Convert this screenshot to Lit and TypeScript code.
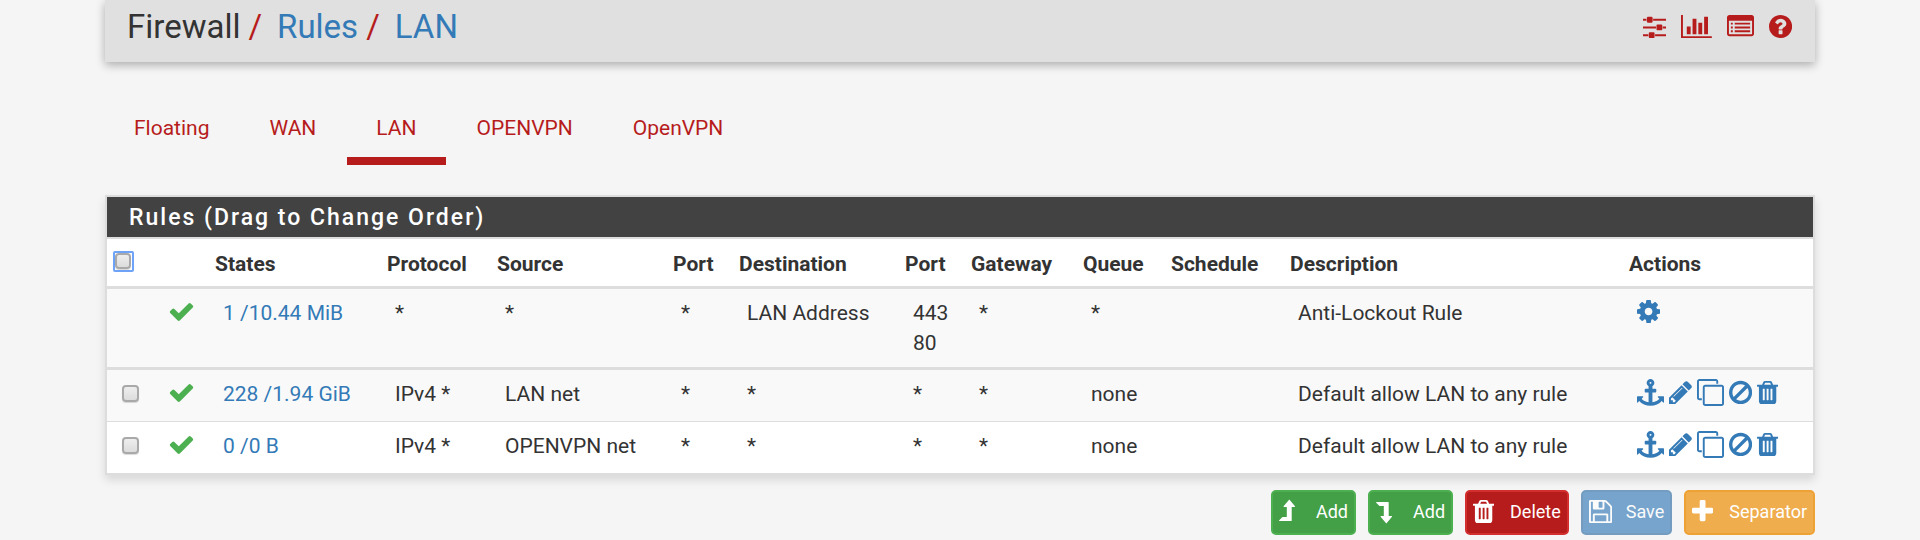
import { LitElement, html, css, svg, nothing } from "lit";
import { customElement, property } from "lit/decorators.js";

const bar = (x: number, y: number, w: number, h: number) => `M${x} ${y}h${w}v${h}h${-w}z`;

const icons: Record<string, { box: [number, number, number, number]; path: string }> = {
  sliders: {
    box: [128, 0, 1536, 1792],
    path: "M480 1408v128h-352v-128h352zm352-128q26 0 45 19t19 45v256q0 26-19 45t-45 19h-256q-26 0-45-19t-19-45v-256q0-26 19-45t45-19h256zm160-384v128h-864v-128h864zm-640-512v128h-224v-128h224zm1312 1024v128h-736v-128h736zm-960-1152q26 0 45 19t19 45v256q0 26-19 45t-45 19h-256q-26 0-45-19t-19-45v-256q0-26 19-45t45-19h256zm640 512q26 0 45 19t19 45v256q0 26-19 45t-45 19h-256q-26 0-45-19t-19-45v-256q0-26 19-45t45-19h256zm320 128v128h-224v-128h224zm0-512v128h-864v-128h864z",
  },
  chart: {
    box: [0, 0, 2048, 1792],
    path: "M640 896v512h-256v-512h256zm384-512v1024h-256v-1024h256zm1024 1152v128h-2048v-1536h128v1408h1920zm-640-896v768h-256v-768h256zm384-384v1152h-256v-1152h256z",
  },
  list: {
    box: [0, 0, 1792, 1792],
    path:
      "M1664 1376v-832q0-13-9.5-22.5t-22.5-9.5h-1472q-13 0-22.5 9.5t-9.5 22.5v832q0 13 9.5 22.5t22.5 9.5h1472q13 0 22.5-9.5t9.5-22.5zm128-1088v1088q0 66-47 113t-113 47h-1472q-66 0-113-47t-47-113v-1088q0-66 47-113t113-47h1472q66 0 113 47t47 113z" +
      [640, 896, 1152].map((y) => bar(256, y, 128, 128) + bar(512, y, 1024, 128)).join(""),
  },
  help: {
    box: [128, 0, 1536, 1792],
    path: "M1024 1376v-192q0-14-9-23t-23-9h-192q-14 0-23 9t-9 23v192q0 14 9 23t23 9h192q14 0 23-9t9-23zm256-672q0-88-55.5-163t-138.5-116-170-41q-243 0-371 213-15 24 8 42l132 100q7 6 19 6 16 0 25-12 53-68 86-92 34-24 86-24 48 0 85.5 26t37.5 59q0 38-20 61t-68 45q-63 28-115.5 86.5t-52.5 125.5v36q0 14 9 23t23 9h192q14 0 23-9t9-23q0-19 21.5-49.5t54.5-49.5q32-18 49-28.5t46-35 44.5-48 28-60.5 12.5-81zm384 192q0 209-103 385.5t-279.5 279.5-385.5 103-385.5-103-279.5-279.5-103-385.5 103-385.5 279.5-279.5 385.5-103 385.5 103 279.5 279.5 103 385.5z",
  },
  check: {
    box: [0, 0, 1792, 1792],
    path: "M1671 566q0 40-28 68l-724 724-136 136q-28 28-68 28t-68-28l-136-136-362-362q-28-28-28-68t28-68l136-136q28-28 68-28t68 28l294 295 656-657q28-28 68-28t68 28l136 136q28 28 28 68z",
  },
  cog: {
    box: [128, 0, 1536, 1792],
    path: "M1152 896q0-106-75-181t-181-75-181 75-75 181 75 181 181 75 181-75 75-181zm512-109v222q0 12-8 23t-20 13l-185 28q-19 54-39 91 35 50 107 138 10 12 10 25t-9 23q-27 37-99 108t-94 71q-12 0-26-9l-138-108q-44 23-91 38-16 136-29 186-7 28-36 28h-222q-14 0-24.5-8.5t-11.5-21.5l-28-184q-49-16-90-37l-141 107q-10 9-25 9-14 0-25-11-126-114-165-168-7-10-7-23 0-12 8-23 15-21 51-66.5t54-70.5q-27-50-41-99l-183-27q-13-2-21-12.5t-8-23.5v-222q0-12 8-23t19-13l186-28q14-46 39-92-40-57-107-138-10-12-10-24 0-10 9-23 26-36 98.5-107.5t94.5-71.5q13 0 26 10l138 107q44-23 91-38 16-136 29-186 7-28 36-28h222q14 0 24.5 8.5t11.5 21.5l28 184q49 16 90 37l142-107q9-9 24-9 13 0 25 10 129 119 165 170 7 8 7 22 0 12-8 23-15 21-51 66.5t-54 70.5q26 50 41 98l183 28q13 2 21 12.5t8 23.5z",
  },
  anchor: {
    box: [0, 0, 1792, 1792],
    path: "M960 256q0-26-19-45t-45-19-45 19-19 45 19 45 45 19 45-19 19-45zm832 928v352q0 22-20 30-8 2-12 2-12 0-23-9l-93-93q-119 143-318.5 226.5t-429.5 83.5-429.5-83.5-318.5-226.5l-93 93q-9 9-23 9-4 0-12-2-20-8-20-30v-352q0-14 9-23t23-9h352q22 0 30 20 8 19-7 35l-100 100q67 91 189.5 153.5t271.5 82.5v-647h-192q-26 0-45-19t-19-45v-128q0-26 19-45t45-19h192v-163q-58-34-93-92.5t-35-128.5q0-106 75-181t181-75 181 75 75 181q0 70-35 128.5t-93 92.5v163h192q26 0 45 19t19 45v128q0 26-19 45t-45 19h-192v647q149-20 271.5-82.5t189.5-153.5l-100-100q-15-16-7-35 8-20 30-20h352q14 0 23 9t9 23z",
  },
  pencil: {
    box: [128, 0, 1536, 1792],
    path: "M491 1536l91-91-235-235-91 91v107h128v128h107zm523-928q0-22-22-22-10 0-17 7l-542 542q-7 7-7 17 0 22 22 22 10 0 17-7l542-542q7-7 7-17zm-54-192l416 416-832 832h-416v-416zm683 96q0 53-37 90l-166 166-416-416 166-165q36-38 90-38 53 0 91 38l235 234q37 39 37 91z",
  },
  clone: {
    box: [0, 0, 1792, 1792],
    path: "M1664 1632v-1088q0-13-9.5-22.5t-22.5-9.5h-1088q-13 0-22.5 9.5t-9.5 22.5v1088q0 13 9.5 22.5t22.5 9.5h1088q13 0 22.5-9.5t9.5-22.5zm128-1088v1088q0 66-47 113t-113 47h-1088q-66 0-113-47t-47-113v-1088q0-66 47-113t113-47h1088q66 0 113 47t47 113zm-384-384v160h-128v-160q0-13-9.5-22.5t-22.5-9.5h-1088q-13 0-22.5 9.5t-9.5 22.5v1088q0 13 9.5 22.5t22.5 9.5h160v128h-160q-66 0-113-47t-47-113v-1088q0-66 47-113t113-47h1088q66 0 113 47t47 113z",
  },
  ban: {
    box: [128, 0, 1536, 1792],
    path: "M1440 893q0-161-87-295l-754 753q137 89 297 89 111 0 211.5-43.5t173.5-116.5 116-174.5 43-212.5zm-999 299l755-754q-135-91-300-91-148 0-273 73t-198 199-73 274q0 162 89 299zm1223-299q0 157-61 300t-163.5 246-245 164-298.5 61-298.5-61-245-164-163.5-246-61-300 61-299.5 163.5-245.5 245-164 298.5-61 298.5 61 245 164 163.5 245.5 61 299.5z",
  },
  trash: {
    box: [192, 0, 1408, 1792],
    path: "M704 1376v-704q0-14-9-23t-23-9h-64q-14 0-23 9t-9 23v704q0 14 9 23t23 9h64q14 0 23-9t9-23zm256 0v-704q0-14-9-23t-23-9h-64q-14 0-23 9t-9 23v704q0 14 9 23t23 9h64q14 0 23-9t9-23zm256 0v-704q0-14-9-23t-23-9h-64q-14 0-23 9t-9 23v704q0 14 9 23t23 9h64q14 0 23-9t9-23zm-544-992h448l-48-117q-7-9-17-11h-317q-10 2-17 11zm928 32v64q0 14-9 23t-23 9h-96v948q0 83-47 143.5t-113 60.5h-832q-66 0-113-58.5t-47-141.5v-952h-96q-14 0-23-9t-9-23v-64q0-14 9-23t23-9h309l70-167q15-37 54-63t79-26h320q40 0 79 26t54 63l70 167h309q14 0 23 9t9 23z",
  },
  up: {
    box: [0, 0, 16, 27],
    path: "M10.3 1.4L16 8.2q.3.7-.4.7H12.7V22.4q0 .6-.6.6H.4q-.6-.2-.2-.7L3.2 19.2q.3-.3.7-.3H7.8V8.9H5q-.8 0-.4-.7z",
  },
  down: {
    box: [0, 0, 16, 27],
    path: "M10.3 25.6L16 18.8q.3-.7-.4-.7H12.7V4.6q0-.6-.6-.6H.4q-.6.2-.2.7L3.2 7.8q.3.3.7.3H7.8V18.1H5q-.8 0-.4.7z",
  },
  save: {
    box: [128, 0, 1536, 1792],
    path: "M512 1536h768v-384h-768v384zm896 0h128v-896q0-14-10-38.5t-20-34.5l-281-281q-10-10-34-20t-39-10v416q0 40-28 68t-68 28h-576q-40 0-68-28t-28-68v-416h-128v1280h128v-416q0-40 28-68t68-28h832q40 0 68 28t28 68v416zm-384-928v-320q0-13-9.5-22.5t-22.5-9.5h-192q-13 0-22.5 9.5t-9.5 22.5v320q0 13 9.5 22.5t22.5 9.5h192q13 0 22.5-9.5t9.5-22.5zm640 32v928q0 40-28 68t-68 28h-1344q-40 0-68-28t-28-68v-1344q0-40 28-68t68-28h928q40 0 88 20t76 48l280 280q28 28 48 76t20 88z",
  },
  plus: {
    box: [192, 0, 1408, 1792],
    path: "M1600 736v192q0 40-28 68t-68 28h-416v416q0 40-28 68t-68 28h-192q-40 0-68-28t-28-68v-416h-416q-40 0-68-28t-28-68v-192q0-40 28-68t68-28h416v-416q0-40 28-68t68-28h192q40 0 68 28t28 68v416h416q40 0 68 28t28 68z",
  },
};

@customElement("fw-icon")
class FwIcon extends LitElement {
  @property() name = "check";

  static styles = css`
    :host {
      display: inline-block;
      height: 27px;
      vertical-align: top;
    }
    svg {
      display: block;
      height: 100%;
      fill: currentColor;
    }
  `;

  render() {
    const icon = icons[this.name];
    return html`<svg viewBox=${icon.box.join(" ")} aria-hidden="true">
      ${svg`<path d=${icon.path}></path>`}
    </svg>`;
  }
}

interface Rule {
  id: string;
  locked?: boolean;
  states: string;
  cells: (string | string[])[];
}

const headings = ["States", "Protocol", "Source", "Port", "Destination", "Port", "Gateway", "Queue", "Schedule", "Description", "Actions"];

const columns = ["select", "status", "states", "protocol", "source", "port", "destination", "port", "gateway", "queue", "schedule", "description", "actions"];

const rules: Rule[] = [
  { id: "lockout", locked: true, states: "1 /10.44 MiB", cells: ["*", "*", "*", "LAN Address", ["443", "80"], "*", "*", "", "Anti-Lockout Rule"] },
  { id: "lan", states: "228 /1.94 GiB", cells: ["IPv4 *", "LAN net", "*", "*", "*", "*", "none", "", "Default allow LAN to any rule"] },
  { id: "openvpn", states: "0 /0 B", cells: ["IPv4 *", "OPENVPN net", "*", "*", "*", "*", "none", "", "Default allow LAN to any rule"] },
];

const tabs = ["Floating", "WAN", "LAN", "OPENVPN", "OpenVPN"];

const tools = [
  ["sliders", "Advanced settings"],
  ["chart", "Status monitoring"],
  ["list", "Firewall log"],
  ["help", "Help"],
];

const rowActions = [
  ["anchor", "Move checked rules here"],
  ["pencil", "Edit"],
  ["clone", "Copy"],
  ["ban", "Disable"],
  ["trash", "Delete"],
];

const buttons = [
  ["add", "up", "Add"],
  ["add", "down", "Add"],
  ["delete", "trash", "Delete"],
  ["save", "save", "Save"],
  ["separator", "plus", "Separator"],
];

@customElement("app-root")
class AppRoot extends LitElement {
  static styles = css`
    :host {
      display: block;
      min-height: 100vh;
      background: #f5f5f5;
      color: #333;
      font: 21px/30px Roboto, "Liberation Sans", sans-serif;
    }
    * {
      box-sizing: border-box;
    }
    a {
      color: #337ab7;
      text-decoration: none;
    }
    .container {
      max-width: 1710px;
      margin: 0 auto;
    }
    .header {
      display: flex;
      justify-content: space-between;
      align-items: flex-start;
      padding: 7px 23px 15px 22px;
      background: #e0e0e0;
      box-shadow: 0 3px 9px rgba(0, 0, 0, 0.3);
    }
    .crumbs {
      display: flex;
      margin: 0;
      padding: 0;
      list-style: none;
      font-size: 33px;
      line-height: 40px;
    }
    .crumbs li + li::before {
      content: "/";
      padding: 0 15px 0 8px;
      color: #b71c1c;
    }
    .tools {
      display: flex;
      gap: 15px;
      padding-top: 6px;
    }
    .tools a {
      color: #b71c1c;
    }
    .tabs {
      display: flex;
      gap: 2px;
      margin: 35px 0 30px;
      padding: 0;
      list-style: none;
    }
    .tabs a {
      display: block;
      padding: 16px 29px 14px;
      border-bottom: 8px solid transparent;
      color: #b71c1c;
    }
    .tabs .active {
      border-color: #b71c1c;
    }
    .panel {
      border: 2px solid #ddd;
      background: #fff;
      box-shadow: 0 5px 9px rgba(0, 0, 0, 0.12);
    }
    .title {
      margin: 0;
      padding: 6px 22px 4px;
      border-bottom: 2px solid #ddd;
      box-sizing: content-box;
      background: #424242;
      color: #fff;
      font-size: 23px;
      line-height: 30px;
      font-weight: 500;
      letter-spacing: 2px;
    }
    table {
      width: 100%;
      table-layout: fixed;
      border-collapse: separate;
      border-spacing: 0;
    }
    .select { width: 45px; }
    .status { width: 55px; }
    .states { width: 172px; }
    .protocol { width: 110px; }
    .source { width: 176px; }
    .port { width: 66px; }
    .destination { width: 166px; }
    .gateway { width: 112px; }
    .queue { width: 88px; }
    .schedule { width: 119px; }
    .actions { width: 192px; }
    th {
      padding: 10px 0 7px 8px;
      border-bottom: 3px solid #ddd;
      text-align: left;
      vertical-align: top;
      font-weight: 700;
      white-space: nowrap;
    }
    td {
      padding: 9px 0 9px 16px;
      vertical-align: top;
      white-space: nowrap;
    }
    td:first-child {
      padding-left: 15px;
    }
    .striped {
      background: #f9f9f9;
    }
    .locked td {
      border-bottom: 3px solid #ddd;
    }
    .divided td {
      border-top: 1px solid #ddd;
    }
    .pass {
      color: #4caf50;
    }
    .icons {
      display: flex;
      gap: 5px;
      min-height: 33px;
    }
    .locked .icons {
      min-height: 0;
    }
    input {
      appearance: none;
      display: block;
      margin: 6px 0 0;
      width: 17px;
      height: 17px;
    }
    input::before {
      content: "";
      display: block;
      width: 17px;
      height: 17px;
      border: 2px solid #a9a9a9;
      border-radius: 4px;
      background: linear-gradient(#eee, #dcdcdc);
      box-shadow: 0 1px 1px rgba(0, 0, 0, 0.15);
      box-sizing: border-box;
    }
    .all {
      width: 21px;
      height: 21px;
      margin: 2px 0 0 -2px;
      border: 2px solid #6ea3f8;
      border-radius: 2px;
    }
    .all::before {
      width: 16px;
      height: 16px;
    }
    .buttons {
      display: flex;
      justify-content: flex-end;
      gap: 12px;
      padding: 15px 0 5px;
    }
    button {
      display: flex;
      align-items: center;
      height: 45px;
      padding: 0 6px 2px 6px;
      border: 2px solid;
      border-radius: 5px;
      color: #fff;
      font: 18px/27px Roboto, "Liberation Sans", sans-serif;
    }
    button fw-icon {
      width: 37px;
    }
    .add {
      background: #43a047;
      border-color: #4caf50;
    }
    .delete {
      background: #b71c1c;
      border-color: #d32f2f;
    }
    .save {
      background: #337ab7;
      border-color: #2e6da4;
      opacity: 0.65;
    }
    .separator {
      background: #f0ad4e;
      border-color: #eea236;
    }
  `;

  private renderRule(rule: Rule, index: number) {
    const rowClass = [index < 2 ? "striped" : "divided", rule.locked ? "locked" : ""].join(" ");
    return html`<tr class=${rowClass}>
      <td>${rule.locked ? nothing : html`<input type="checkbox" aria-label="Select rule ${rule.id}" />`}</td>
      <td class="pass"><fw-icon name="check"></fw-icon></td>
      <td><a href="#states">${rule.states}</a></td>
      ${rule.cells.map((cell) => html`<td>${Array.isArray(cell) ? cell.map((line) => html`<div>${line}</div>`) : cell}</td>`)}
      <td>
        <div class="icons">
          ${(rule.locked ? [["cog", "Settings"]] : rowActions).map(
            ([name, label]) => html`<a href="#${name}" aria-label=${label}><fw-icon name=${name}></fw-icon></a>`,
          )}
        </div>
      </td>
    </tr>`;
  }

  render() {
    return html`
      <div class="container">
        <header class="header">
          <ol class="crumbs">
            <li>Firewall</li>
            <li><a href="#rules">Rules</a></li>
            <li><a href="#lan">LAN</a></li>
          </ol>
          <nav class="tools">
            ${tools.map(([name, label]) => html`<a href="#${name}" aria-label=${label}><fw-icon name=${name}></fw-icon></a>`)}
          </nav>
        </header>
        <ul class="tabs">
          ${tabs.map((tab) => html`<li><a class=${tab === "LAN" ? "active" : ""} href="#${tab}">${tab}</a></li>`)}
        </ul>
        <section class="panel">
          <h2 class="title">Rules (Drag to Change Order)</h2>
          <table>
            <colgroup>
              ${columns.map((name) => html`<col class=${name} />`)}
            </colgroup>
            <thead>
              <tr>
                <th><input class="all" type="checkbox" aria-label="Select all rules" /></th>
                <th></th>
                ${headings.map((heading) => html`<th>${heading}</th>`)}
              </tr>
            </thead>
            <tbody>
              ${rules.map((rule, index) => this.renderRule(rule, index))}
            </tbody>
          </table>
        </section>
        <div class="buttons">
          ${buttons.map(([kind, icon, label]) => html`<button type="button" class=${kind}><fw-icon name=${icon}></fw-icon>${label}</button>`)}
        </div>
      </div>
    `;
  }
}
